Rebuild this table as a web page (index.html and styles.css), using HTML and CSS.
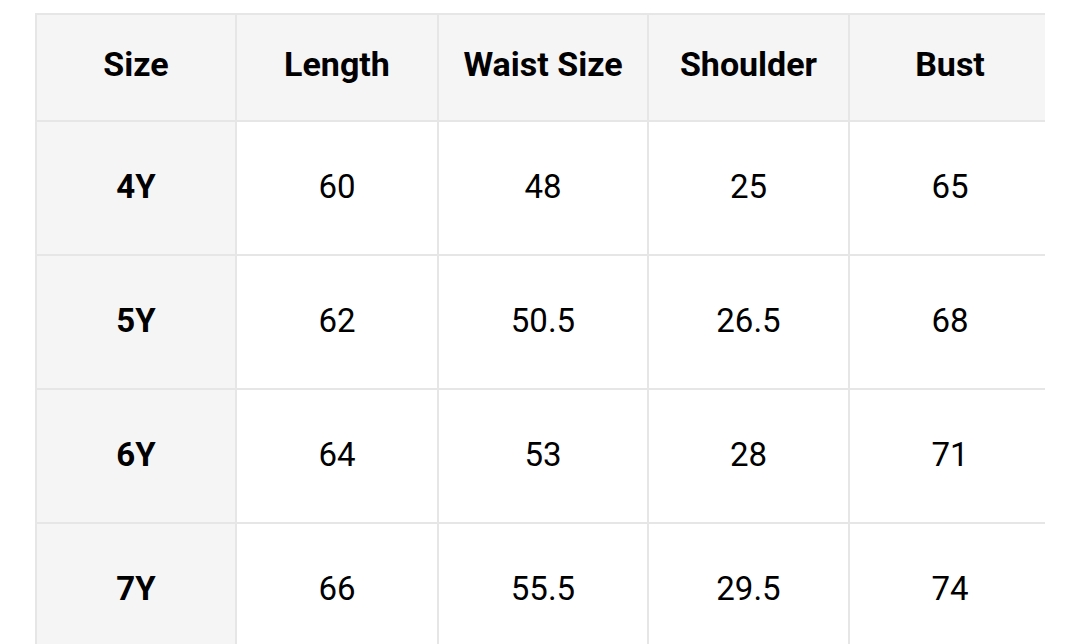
FILE: index.html
```html
<!DOCTYPE html>
<html>
<head>
<meta charset="utf-8">
<link rel="stylesheet" href="styles.css">
</head>
<body>
<div class="wrap">
  <div class="grid">
    <div class="cell head">Size</div>
    <div class="cell head">Length</div>
    <div class="cell head">Waist Size</div>
    <div class="cell head">Shoulder</div>
    <div class="cell head">Bust</div>

    <div class="cell first">4Y</div>
    <div class="cell">60</div>
    <div class="cell">48</div>
    <div class="cell">25</div>
    <div class="cell">65</div>

    <div class="cell first">5Y</div>
    <div class="cell">62</div>
    <div class="cell">50.5</div>
    <div class="cell">26.5</div>
    <div class="cell">68</div>

    <div class="cell first">6Y</div>
    <div class="cell">64</div>
    <div class="cell">53</div>
    <div class="cell">28</div>
    <div class="cell">71</div>

    <div class="cell first">7Y</div>
    <div class="cell">66</div>
    <div class="cell">55.5</div>
    <div class="cell">29.5</div>
    <div class="cell">74</div>
  </div>
</div>
</body>
</html>
```
FILE: styles.css
```css
html, body {
  margin: 0;
  padding: 0;
  background: #ffffff;
  font-family: Roboto, "Liberation Sans", sans-serif;
  color: #000;
}
.wrap {
  margin: 13px 0 0 35px;
  width: 1010px;
  height: 631px;
  overflow: hidden;
}
.grid {
  display: grid;
  grid-template-columns: 198px 200px 208px 199px 200px;
  grid-template-rows: 105px 132px 132px 132px 132px;
  gap: 2px;
  padding: 2px;
  width: max-content;
  background: #e6e6e6;
}
.cell {
  background: #ffffff;
  display: flex;
  align-items: center;
  justify-content: center;
  font-size: 33px;
  padding-bottom: 4px;
}
.head {
  background: #f5f5f5;
  font-weight: 700;
  font-size: 34px;
  padding-bottom: 7px;
}
.first {
  background: #f5f5f5;
  font-weight: 700;
}
```
